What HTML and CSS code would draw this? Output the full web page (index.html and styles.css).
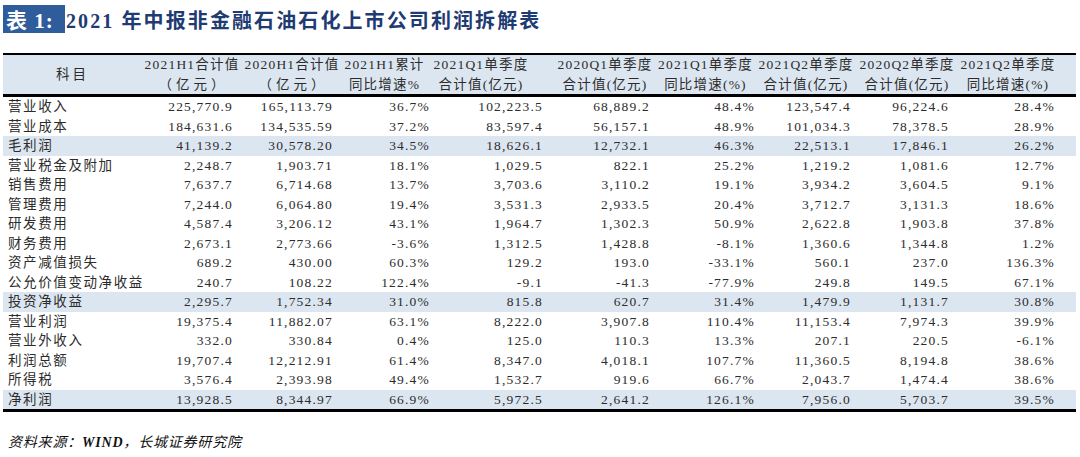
FILE: index.html
```html
<!DOCTYPE html>
<html lang="zh-CN">
<head>
<meta charset="utf-8">
<title>表1</title>
<link rel="stylesheet" href="styles.css">
</head>
<body>
<div class="page">
  <div class="title">
    <span class="tag">表 1:</span>
    <span class="title-text">2021 年中报非金融石油石化上市公司利润拆解表</span>
  </div>
  <div class="table">
    <div class="head">
      <div class="hc"><span>科目</span></div>
      <div class="hc"><span>2021H1合计值</span><span class="wide">（亿元）</span></div>
      <div class="hc"><span>2020H1合计值</span><span class="wide">（亿元）</span></div>
      <div class="hc"><span>2021H1累计</span><span>同比增速%</span></div>
      <div class="hc"><span>2021Q1单季度</span><span>合计值(亿元)</span></div>
      <div class="hc"><span>2020Q1单季度</span><span>合计值(亿元)</span></div>
      <div class="hc"><span>2021Q1单季度</span><span>同比增速(%)</span></div>
      <div class="hc"><span>2021Q2单季度</span><span>合计值(亿元)</span></div>
      <div class="hc"><span>2020Q2单季度</span><span>合计值(亿元)</span></div>
      <div class="hc"><span>2021Q2单季度</span><span>同比增速(%)</span></div>
      <div class="hc"></div>
    </div>
    <div class="row"><div class="lbl">营业收入</div><div>225,770.9</div><div>165,113.79</div><div>36.7%</div><div>102,223.5</div><div>68,889.2</div><div>48.4%</div><div>123,547.4</div><div>96,224.6</div><div>28.4%</div><div></div></div>
    <div class="row"><div class="lbl">营业成本</div><div>184,631.6</div><div>134,535.59</div><div>37.2%</div><div>83,597.4</div><div>56,157.1</div><div>48.9%</div><div>101,034.3</div><div>78,378.5</div><div>28.9%</div><div></div></div>
    <div class="row hl"><div class="lbl">毛利润</div><div>41,139.2</div><div>30,578.20</div><div>34.5%</div><div>18,626.1</div><div>12,732.1</div><div>46.3%</div><div>22,513.1</div><div>17,846.1</div><div>26.2%</div><div></div></div>
    <div class="row"><div class="lbl">营业税金及附加</div><div>2,248.7</div><div>1,903.71</div><div>18.1%</div><div>1,029.5</div><div>822.1</div><div>25.2%</div><div>1,219.2</div><div>1,081.6</div><div>12.7%</div><div></div></div>
    <div class="row"><div class="lbl">销售费用</div><div>7,637.7</div><div>6,714.68</div><div>13.7%</div><div>3,703.6</div><div>3,110.2</div><div>19.1%</div><div>3,934.2</div><div>3,604.5</div><div>9.1%</div><div></div></div>
    <div class="row"><div class="lbl">管理费用</div><div>7,244.0</div><div>6,064.80</div><div>19.4%</div><div>3,531.3</div><div>2,933.5</div><div>20.4%</div><div>3,712.7</div><div>3,131.3</div><div>18.6%</div><div></div></div>
    <div class="row"><div class="lbl">研发费用</div><div>4,587.4</div><div>3,206.12</div><div>43.1%</div><div>1,964.7</div><div>1,302.3</div><div>50.9%</div><div>2,622.8</div><div>1,903.8</div><div>37.8%</div><div></div></div>
    <div class="row"><div class="lbl">财务费用</div><div>2,673.1</div><div>2,773.66</div><div>-3.6%</div><div>1,312.5</div><div>1,428.8</div><div>-8.1%</div><div>1,360.6</div><div>1,344.8</div><div>1.2%</div><div></div></div>
    <div class="row"><div class="lbl">资产减值损失</div><div>689.2</div><div>430.00</div><div>60.3%</div><div>129.2</div><div>193.0</div><div>-33.1%</div><div>560.1</div><div>237.0</div><div>136.3%</div><div></div></div>
    <div class="row"><div class="lbl">公允价值变动净收益</div><div>240.7</div><div>108.22</div><div>122.4%</div><div>-9.1</div><div>-41.3</div><div>-77.9%</div><div>249.8</div><div>149.5</div><div>67.1%</div><div></div></div>
    <div class="row hl"><div class="lbl">投资净收益</div><div>2,295.7</div><div>1,752.34</div><div>31.0%</div><div>815.8</div><div>620.7</div><div>31.4%</div><div>1,479.9</div><div>1,131.7</div><div>30.8%</div><div></div></div>
    <div class="row"><div class="lbl">营业利润</div><div>19,375.4</div><div>11,882.07</div><div>63.1%</div><div>8,222.0</div><div>3,907.8</div><div>110.4%</div><div>11,153.4</div><div>7,974.3</div><div>39.9%</div><div></div></div>
    <div class="row"><div class="lbl">营业外收入</div><div>332.0</div><div>330.84</div><div>0.4%</div><div>125.0</div><div>110.3</div><div>13.3%</div><div>207.1</div><div>220.5</div><div>-6.1%</div><div></div></div>
    <div class="row"><div class="lbl">利润总额</div><div>19,707.4</div><div>12,212.91</div><div>61.4%</div><div>8,347.0</div><div>4,018.1</div><div>107.7%</div><div>11,360.5</div><div>8,194.8</div><div>38.6%</div><div></div></div>
    <div class="row"><div class="lbl">所得税</div><div>3,576.4</div><div>2,393.98</div><div>49.4%</div><div>1,532.7</div><div>919.6</div><div>66.7%</div><div>2,043.7</div><div>1,474.4</div><div>38.6%</div><div></div></div>
    <div class="row hl"><div class="lbl">净利润</div><div>13,928.5</div><div>8,344.97</div><div>66.9%</div><div>5,972.5</div><div>2,641.2</div><div>126.1%</div><div>7,956.0</div><div>5,703.7</div><div>39.5%</div><div></div></div>
  </div>
  <p class="source">资料来源：<b>WIND</b>，长城证券研究院</p>
</div>
</body>
</html>
```

FILE: styles.css
```css
* {
  box-sizing: border-box;
  margin: 0;
  padding: 0;
}

body {
  width: 1080px;
  height: 457px;
  overflow: hidden;
  background: #ffffff;
  font-family: "Liberation Serif", "Noto Sans CJK SC", serif;
  color: #2c2c2c;
  text-spacing-trim: space-all;
}

.page {
  padding: 5px 0 0 3px;
}

.title {
  display: flex;
  align-items: center;
  height: 28px;
  font-weight: bold;
  font-size: 21px;
}

.tag {
  display: flex;
  align-items: center;
  width: 62px;
  height: 28px;
  padding-left: 3px;
  background: #2f5d9b;
  color: #ffffff;
  letter-spacing: 1px;
}

.title-text {
  padding-left: 1px;
  color: #1f3b73;
  letter-spacing: 2.1px;
  font-size: 20px;
}

.table {
  margin-top: 20px;
  width: 1073px;
  border-top: 2px solid #000000;
  border-bottom: 3px solid #000000;
  font-size: 13.5px;
  letter-spacing: 1.2px;
}

.head,
.row {
  display: grid;
  grid-template-columns: 139px 94px 100px 97px 113px 107px 105px 96px 98px 106px 18px;
}

.head {
  height: 42px;
  background: #dce6f1;
  border-bottom: 3px solid #000000;
}

.hc {
  display: flex;
  flex-direction: column;
  align-items: center;
  justify-content: center;
  line-height: 19.5px;
  white-space: nowrap;
}

.hc .wide {
  letter-spacing: 4px;
  padding-left: 3px;
}

.head > .hc:first-child { letter-spacing: 3px; }
.head > .hc:nth-child(2) { padding-left: 6px; }
.head > .hc:nth-child(3) { padding-left: 12px; }
.head > .hc:nth-child(5) { padding-right: 17px; }
.head > .hc:nth-child(6) { padding-left: 11px; }
.head > .hc:nth-child(9) { padding-left: 8px; }
.head > .hc:nth-child(10) { padding-left: 6px; }

.row {
  height: 19.5px;
  align-items: center;
  line-height: 19.5px;
  white-space: nowrap;
}

.row > div {
  text-align: right;
  padding-right: 3px;
}

.row > .lbl {
  text-align: left;
  padding-left: 5px;
  padding-right: 0;
  letter-spacing: 1.6px;
}

.hl {
  background: #dce6f1;
}

.source {
  margin-top: 21px;
  padding-left: 5px;
  line-height: 20px;
  font-size: 14px;
  font-style: italic;
  color: #111111;
  letter-spacing: 0.8px;
}

.source b {
  font-weight: bold;
}
```
